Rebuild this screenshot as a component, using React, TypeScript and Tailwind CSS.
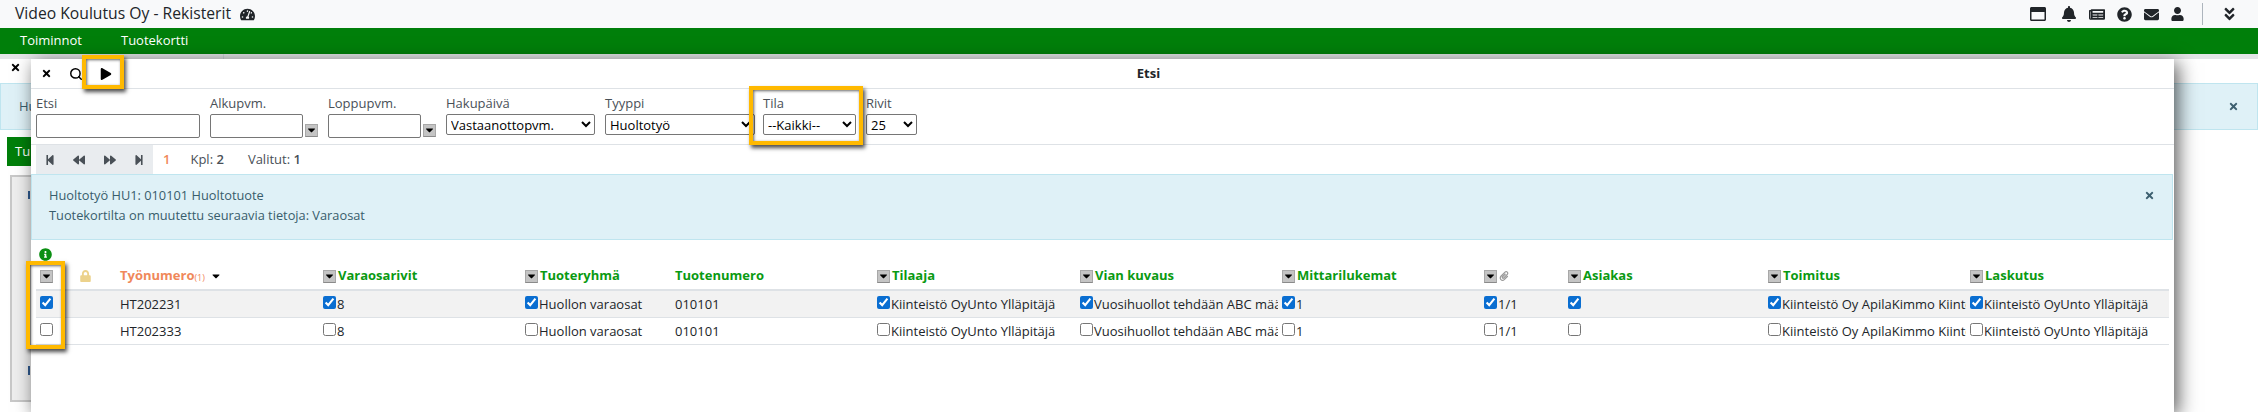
import React from 'react';
import { Search } from 'lucide-react';
import {
  FaAngleDoubleDown,
  FaBackward,
  FaBell,
  FaCaretDown,
  FaEnvelope,
  FaForward,
  FaInfoCircle,
  FaLock,
  FaNewspaper,
  FaPaperclip,
  FaPlay,
  FaQuestionCircle,
  FaRegWindowMaximize,
  FaStepBackward,
  FaStepForward,
  FaTachometerAlt,
  FaTimes,
  FaUser,
} from 'react-icons/fa';

const COLS = 'grid grid-cols-[40px_40px_203px_202px_150px_202px_203px_202px_202px_84px_200px_202px_203px] w-[2133px] ml-[5px]';

const DropButton = () => (
  <span className="inline-flex items-center justify-center w-[13px] h-[13px] shrink-0 bg-[#c4c4c4] border border-[#a8a8a8] border-b-[#8a8a8a]">
    <FaCaretDown className="w-3 h-3 text-black" />
  </span>
);

const Highlight = ({ className }: { className: string }) => (
  <div className={`absolute border-[4px] border-[#ffb900] shadow-[2px_3px_4px_rgba(0,0,0,0.7),inset_1px_1px_3px_rgba(0,0,0,0.6)] ${className}`} />
);

const Field = ({ label, children }: { label: string; children: React.ReactNode }) => (
  <div className="flex flex-col">
    <label className="h-5 leading-[18px] text-[#495057]">{label}</label>
    {children}
  </div>
);

const DateField = ({ label }: { label: string }) => (
  <Field label={label}>
    <div className="flex items-start gap-[2px]">
      <input className="w-[93px] h-6 border border-[#767676] rounded-[2px] bg-white" />
      <span className="mt-2">
        <DropButton />
      </span>
    </div>
  </Field>
);

const Select = ({ width, value }: { width: string; value: string }) => (
  <select
    defaultValue={value}
    className={`${width} h-[21px] border border-[#767676] rounded-[2px] bg-white text-[13px] text-black`}
  >
    <option>{value}</option>
  </select>
);

const Head = ({ label, drop = true }: { label: string; drop?: boolean }) => (
  <div className="flex items-center gap-[2px] pl-1 font-bold text-[#0a9a12] whitespace-nowrap">
    {drop && <DropButton />}
    {label}
  </div>
);

const Cell = ({ checked, text }: { checked: boolean; text?: string }) => (
  <div className="flex items-center gap-[1px] pl-1 pr-[2px] whitespace-nowrap overflow-hidden">
    <input
      type="checkbox"
      readOnly
      checked={checked}
      className="w-[13px] h-[13px] m-0 mb-[4px] shrink-0 accent-[#0a6ed1]"
    />
    {text && <span className="pt-[2px]">{text}</span>}
  </div>
);

const Row = ({ checked, number, shaded }: { checked: boolean; number: string; shaded?: boolean }) => (
  <div className={`${COLS} h-[27px] items-center border-b border-[#dee2e6] ${shaded ? 'bg-[#f2f2f2]' : ''}`}>
    <Cell checked={checked} />
    <div />
    <div className="pl-1 pt-[2px]">{number}</div>
    <Cell checked={checked} text="8" />
    <Cell checked={checked} text="Huollon varaosat" />
    <div className="pl-1 pt-[2px]">010101</div>
    <Cell checked={checked} text="Kiinteistö OyUnto Ylläpitäjä" />
    <Cell checked={checked} text="Vuosihuollot tehdään ABC määräysten mukaan" />
    <Cell checked={checked} text="1" />
    <Cell checked={checked} text="1/1" />
    <Cell checked={checked} />
    <Cell checked={checked} text="Kiinteistö Oy ApilaKimmo Kiinteistö" />
    <Cell checked={checked} text="Kiinteistö OyUnto Ylläpitäjä" />
  </div>
);

export default function App() {
  return (
    <div className="relative w-[2258px] h-[412px] overflow-hidden bg-white text-[13px] text-[#212529] font-['Open_Sans',sans-serif]">
      {/* top bar */}
      <header className="flex items-center h-7 pl-[15px] bg-[#f8f9fa]">
        <span className="text-[15.7px] text-[#212529]">Video Koulutus Oy - Rekisterit</span>
        <FaTachometerAlt className="ml-[9px] w-[15px] h-[15px] text-[#212529]" />
        <div className="ml-auto flex items-center text-[#212529]">
          <FaRegWindowMaximize className="w-4 h-4" />
          <FaBell className="ml-4 w-[14px] h-4" />
          <FaNewspaper className="ml-[13px] w-[16px] h-[15px]" />
          <FaQuestionCircle className="ml-3 w-[15px] h-[15px]" />
          <FaEnvelope className="ml-3 w-[15px] h-[15px]" />
          <FaUser className="ml-3 w-[13px] h-[14px]" />
          <div className="ml-[18px] w-px h-[22px] bg-[#adb5bd]" />
          <FaAngleDoubleDown className="ml-5 mr-[22px] w-[13px] h-[16px]" />
        </div>
      </header>
      <nav className="flex items-center h-[26px] bg-[#007f0a] text-white pl-5 gap-[39px]">
        <span>Toiminnot</span>
        <span>Tuotekortti</span>
      </nav>

      {/* page behind the dialog */}
      <div className="flex h-[5px] bg-[#e3e5e7]">
        <div className="ml-[223px] w-px bg-[#ced4da]" />
      </div>
      <div className="h-6 pl-[10px] pt-[1px]">
        <FaTimes className="w-[11px] h-[11px] mt-[2px] text-black" />
      </div>
      <div className="flex items-center justify-between h-[47px] pl-[18px] pr-[18px] bg-[#dff1f7] border border-[#bfe5ef] text-[#385d6c]">
        <span>Hu</span>
        <FaTimes className="w-[11px] h-[11px] text-[#3d6070]" />
      </div>
      <div className="ml-[7px] mt-[7px] w-[40px] h-[29px] pl-2 leading-[29px] bg-[#007f0a] text-white">Tu</div>
      <div className="ml-[10px] mt-[9px] w-[40px] h-[227px] border-2 border-[#c8c8c8] bg-[#eeeeee] pl-4 pt-[14px]">
        <div className="w-[2px] h-2 bg-[#2f5a8f]" />
        <div className="mt-[167px] w-[2px] h-[9px] bg-[#2f5a8f]" />
      </div>

      {/* search dialog */}
      <div className="absolute left-[31px] top-[59px] w-[2143px] h-[353px] bg-white shadow-[4px_4px_18px_rgba(0,0,0,0.65)]">
        <div className="flex items-center h-[30px] border-b border-[#dee2e6]">
          <div className="flex items-center w-[92px] shrink-0 text-black">
            <FaTimes className="ml-[10px] w-[11px] h-[11px]" />
            <Search className="ml-[17px] w-[14px] h-[14px]" strokeWidth={2.5} />
            <FaPlay className="ml-[17px] w-[12px] h-[12px]" />
          </div>
          <div className="flex-1 text-center font-bold">Etsi</div>
        </div>

        <div className="flex h-[56px] pl-[5px] pt-[5px] border-b border-[#dee2e6]">
          <Field label="Etsi">
            <input className="w-[164px] h-6 border border-[#767676] rounded-[2px] bg-white" />
          </Field>
          <div className="ml-[10px]">
            <DateField label="Alkupvm." />
          </div>
          <div className="ml-[10px]">
            <DateField label="Loppupvm." />
          </div>
          <div className="ml-[10px]">
            <Field label="Hakupäivä">
              <Select width="w-[149px]" value="Vastaanottopvm." />
            </Field>
          </div>
          <div className="ml-[10px]">
            <Field label="Tyyppi">
              <Select width="w-[150px]" value="Huoltotyö" />
            </Field>
          </div>
          <div className="ml-2">
            <Field label="Tila">
              <Select width="w-[93px]" value="--Kaikki--" />
            </Field>
          </div>
          <div className="ml-[10px]">
            <Field label="Rivit">
              <Select width="w-[51px]" value="25" />
            </Field>
          </div>
        </div>

        <div className="flex items-center h-[29px] text-[#495057]">
          <div className="flex items-center h-full w-[117px] ml-[5px] pl-[9px] bg-[#e9ecef] text-[#495057]">
            <FaStepBackward className="w-[10px] h-3" />
            <FaBackward className="ml-[17px] w-[14px] h-3" />
            <FaForward className="ml-[17px] w-[14px] h-3" />
            <FaStepForward className="ml-[17px] w-[10px] h-3" />
          </div>
          <span className="ml-[10px] font-semibold text-[#f0885a]">1</span>
          <span className="ml-5">
            Kpl: <b className="font-semibold">2</b>
          </span>
          <span className="ml-6">
            Valitut: <b className="font-semibold">1</b>
          </span>
        </div>

        <div className="relative h-[66px] mr-px pl-[17px] pt-[10px] bg-[#dff1f7] border border-[#bfe5ef] text-[12.8px] text-[#385d6c] leading-5">
          <div>Huoltotyö HU1: 010101 Huoltotuote</div>
          <div>Tuotekortilta on muutettu seuraavia tietoja: Varaosat</div>
          <FaTimes className="absolute right-[17px] top-[15px] w-[11px] h-[11px] text-[#3d6070]" />
        </div>

        <FaInfoCircle className="ml-2 mt-2 w-[13px] h-[13px] text-[#0a8f12]" />
        <div className={`${COLS} h-[30px] pt-[2px] items-center border-b-2 border-[#dee2e6]`}>
          <Head label="" />
          <div className="pl-1">
            <FaLock className="w-[11px] h-[12px] text-[#ecd28c]" />
          </div>
          <div className="flex items-center pl-1 font-bold text-[#f0885a]">
            Työnumero<span className="text-[9px] font-normal mt-1">(1)</span>
            <FaCaretDown className="ml-[5px] w-3 h-3 text-black" />
          </div>
          <Head label="Varaosarivit" />
          <Head label="Tuoteryhmä" />
          <Head label="Tuotenumero" drop={false} />
          <Head label="Tilaaja" />
          <Head label="Vian kuvaus" />
          <Head label="Mittarilukemat" />
          <div className="flex items-center gap-[2px] pl-1">
            <DropButton />
            <FaPaperclip className="w-[10px] h-[10px] text-[#9a9a9a]" />
          </div>
          <Head label="Asiakas" />
          <Head label="Toimitus" />
          <Head label="Laskutus" />
        </div>
        <Row checked number="HT202231" shaded />
        <Row checked={false} number="HT202333" />
      </div>

      {/* annotation frames */}
      <Highlight className="left-[82px] top-[55px] w-[42px] h-[34px]" />
      <Highlight className="left-[749px] top-[86px] w-[114px] h-[59px]" />
      <Highlight className="left-[26px] top-[261px] w-[39px] h-[88px]" />
    </div>
  );
}
